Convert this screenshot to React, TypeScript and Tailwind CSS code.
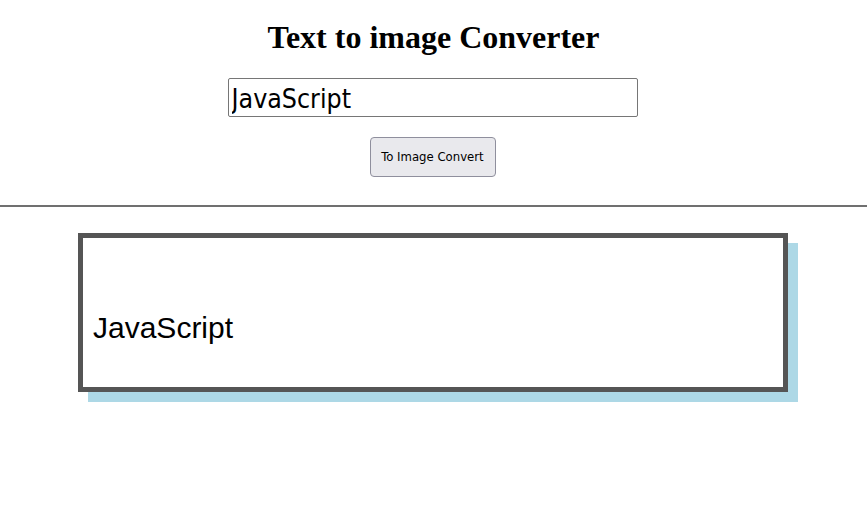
import React, { useState } from "react";

export default function App() {
  const [text, setText] = useState("JavaScript");
  const [shown, setShown] = useState("JavaScript");
  return (
    <div className="min-h-[508px] bg-white">
      <div className="flex flex-col items-center">
        <h1 className="mt-[19px] text-[32px] leading-[36px] font-bold text-black [font-family:'Liberation_Serif','Times_New_Roman',serif]">
          Text to image Converter
        </h1>
        <input
          value={text}
          onChange={(e) => setText(e.target.value)}
          className="mt-[23px] ml-[-2px] w-[410px] h-[39px] border border-[#767676] rounded-[2px] px-[3px] pt-[2px] text-[26.5px] text-black outline-none [font-family:'DejaVu_Sans_Condensed','DejaVu_Sans',sans-serif]"
        />
        <button
          onClick={() => setShown(text)}
          className="mt-[20px] ml-[-2px] w-[126px] h-[40px] bg-[#e9e9ed] border border-[#8f8f9d] rounded-[4px] text-[13px] text-black [font-family:'DejaVu_Sans_Condensed','DejaVu_Sans',sans-serif]"
        >
          To Image Convert
        </button>
      </div>
      <div className="mt-[28px] h-[2px] bg-[#707070]" />
      <div className="mt-[26px] flex justify-center">
        <div className="ml-[-1px] w-[710px] h-[159px] border-[5px] border-[#555555] bg-white shadow-[10px_10px_0_0_#add8e6] pl-[10px] pt-[73px] text-[30px] leading-[34px] text-black [font-family:'Liberation_Sans',Arial,sans-serif]">
          {shown}
        </div>
      </div>
    </div>
  );
}
